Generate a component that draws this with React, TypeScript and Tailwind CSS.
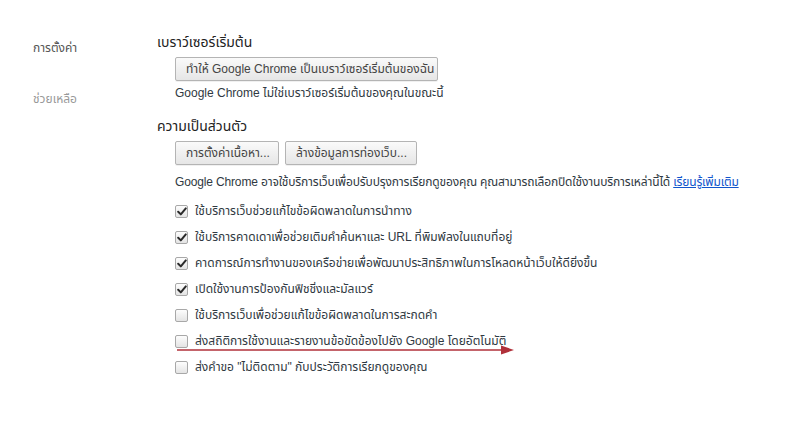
import React, { FC } from 'react';

interface CheckRowProps {
  label: string;
  checked: boolean;
}

const CheckRow: FC<CheckRowProps> = ({ label, checked }) => (
  <div className="flex items-center h-[26px]">
    <span className="w-[13px] h-[13px] rounded-[2px] border border-[#a8a8a8] bg-gradient-to-b from-[#fdfdfd] to-[#e4e4e4] flex items-center justify-center shrink-0">
      {checked && (
        <svg width="10" height="9" viewBox="0 0 10 9">
          <path d="M1.2 4.8 L3.8 7.4 L8.8 1.4" fill="none" stroke="#2a2a2a" strokeWidth="2" strokeLinecap="round" strokeLinejoin="round" />
        </svg>
      )}
    </span>
    <span className="ml-[7px] whitespace-nowrap">{label}</span>
  </div>
);

const Btn: FC<{ children: React.ReactNode; className?: string }> = ({ children, className }) => (
  <button
    className={`h-[24px] px-[10px] rounded-[2px] border border-[#b4b4b4] bg-gradient-to-b from-[#fafafa] to-[#e6e6e6] text-[#444] text-[12px] shadow-[0_1px_0_rgba(0,0,0,0.06)] whitespace-nowrap ${className ?? ''}`}
  >
    {children}
  </button>
);

export default function App() {
  return (
    <div
      className="w-[800px] h-[425px] bg-white flex text-[12px] text-[#303942] overflow-hidden"
      style={{ fontFamily: 'Tahoma, "Liberation Sans", "Noto Sans", "Noto Sans Thai", sans-serif' }}
    >
      <div className="w-[157px] shrink-0 pl-[33px] pt-[39px] flex flex-col">
        <div className="text-[#555] h-[17px]">การตั้งค่า</div>
        <div className="text-[#999] mt-[34px]">ช่วยเหลือ</div>
      </div>

      <div className="flex-1 pt-[33px]">
        <div className="text-[14px] text-[#222] leading-[18px]">เบราว์เซอร์เริ่มต้น</div>
        <div className="pl-[18px] mt-[6px]">
          <Btn className="w-[263px]">ทำให้ Google Chrome เป็นเบราว์เซอร์เริ่มต้นของฉัน</Btn>
          <div className="mt-[4px] leading-[16px]">Google Chrome ไม่ใช่เบราว์เซอร์เริ่มต้นของคุณในขณะนี้</div>
        </div>

        <div className="text-[14px] text-[#222] leading-[18px] mt-[16px]">ความเป็นส่วนตัว</div>
        <div className="pl-[18px] mt-[6px]">
          <div className="flex gap-[6px]">
            <Btn className="w-[104px]">การตั้งค่าเนื้อหา...</Btn>
            <Btn className="w-[132px]">ล้างข้อมูลการท่องเว็บ...</Btn>
          </div>
          <div className="mt-[9px] leading-[16px] whitespace-nowrap tracking-[-0.15px]">
            Google Chrome อาจใช้บริการเว็บเพื่อปรับปรุงการเรียกดูของคุณ คุณสามารถเลือกปิดใช้งานบริการเหล่านี้ได้{' '}
            <a href="#" className="text-[#1155cc] underline">เรียนรู้เพิ่มเติม</a>
          </div>
          <div className="mt-[8px] flex flex-col">
            <CheckRow checked label="ใช้บริการเว็บช่วยแก้ไขข้อผิดพลาดในการนำทาง" />
            <CheckRow checked label="ใช้บริการคาดเดาเพื่อช่วยเติมคำค้นหาและ URL ที่พิมพ์ลงในแถบที่อยู่" />
            <CheckRow checked label="คาดการณ์การทำงานของเครือข่ายเพื่อพัฒนาประสิทธิภาพในการโหลดหน้าเว็บให้ดียิ่งขึ้น" />
            <CheckRow checked label="เปิดใช้งานการป้องกันฟิชชิ่งและมัลแวร์" />
            <CheckRow checked={false} label="ใช้บริการเว็บเพื่อช่วยแก้ไขข้อผิดพลาดในการสะกดคำ" />
            <div className="relative">
              <CheckRow checked={false} label="ส่งสถิติการใช้งานและรายงานข้อขัดข้องไปยัง Google โดยอัตโนมัติ" />
              <svg className="absolute left-[2px] top-[17px]" width="340" height="10" viewBox="0 0 340 10">
                <line x1="0" y1="5" x2="326" y2="5" stroke="#b0303a" strokeWidth="1.6" />
                <path d="M324 0.5 L337 5 L324 9.5 Z" fill="#b0303a" />
              </svg>
            </div>
            <CheckRow checked={false} label={'ส่งคำขอ "ไม่ติดตาม" กับประวัติการเรียกดูของคุณ'} />
          </div>
        </div>
      </div>
    </div>
  );
}
